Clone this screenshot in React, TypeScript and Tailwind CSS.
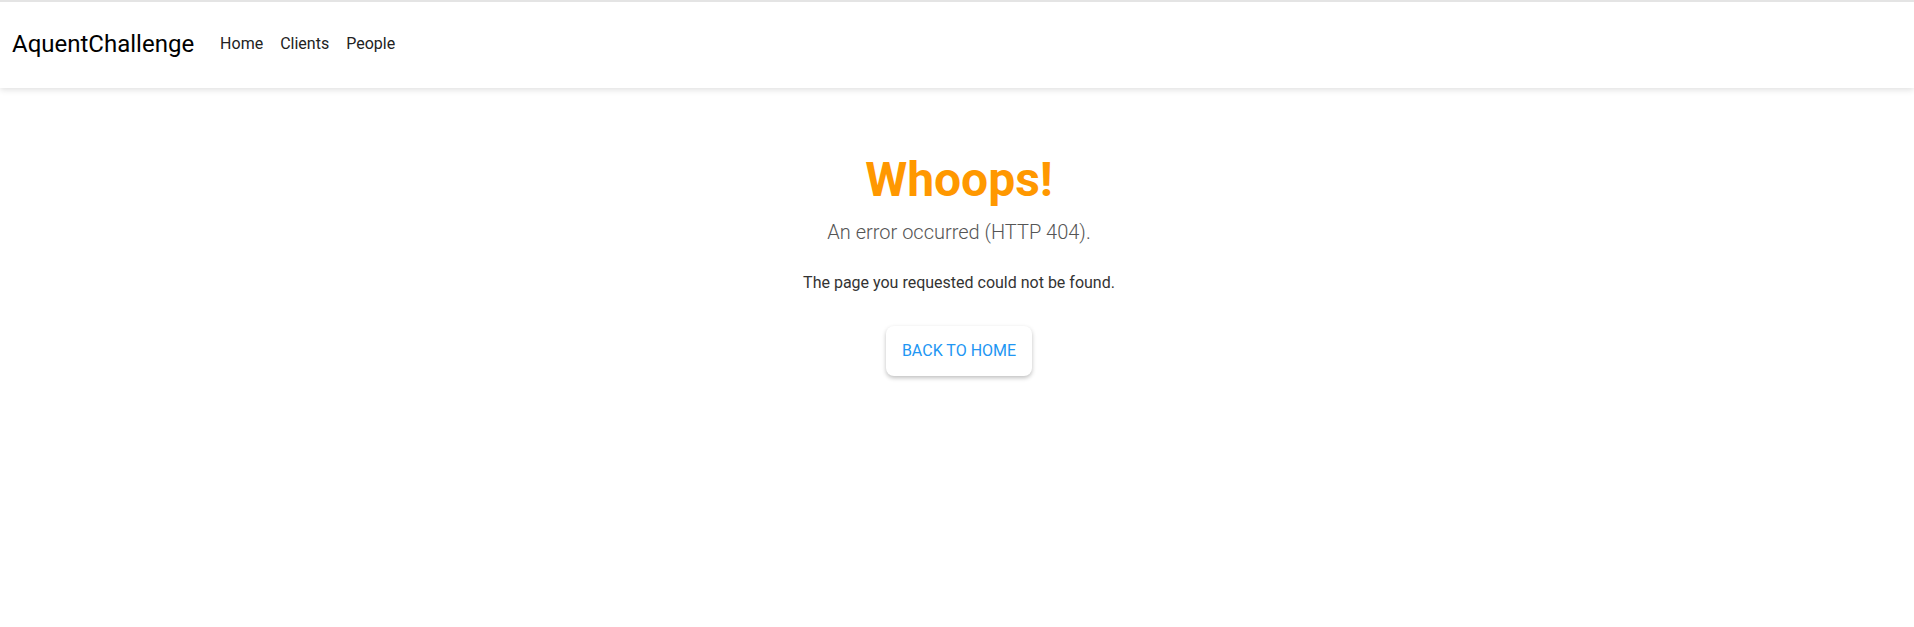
export default function App() {
  return (
    <div className="min-h-screen bg-white font-['Roboto',sans-serif]">
      <nav className="relative z-10 h-[88px] border-t-2 border-[#e4e4e4] bg-white shadow-[0_2px_6px_rgba(0,0,0,0.12)] flex items-center px-[12px] pb-[2px]">
        <a className="text-[24px] text-black leading-none mr-[26px]">AquentChallenge</a>
        <div className="flex items-center gap-[17px] text-[16px] text-[#222]">
          <a>Home</a>
          <a>Clients</a>
          <a>People</a>
        </div>
      </nav>
      <main className="flex flex-col items-center pt-[63px] pl-[4px]">
        <h1 className="text-[48px] font-bold text-[#ff9800] leading-[58px]">Whoops!</h1>
        <p className="mt-[9px] text-[20px] font-light text-[#555] leading-[28px]">An error occurred (HTTP 404).</p>
        <p className="mt-[25px] text-[16px] text-[#333] leading-[24px]">The page you requested could not be found.</p>
        <button className="mt-[31px] h-[50px] px-[16px] rounded-[8px] bg-white text-[16px] uppercase text-[#2196f3] shadow-[0_2px_4px_rgba(0,0,0,0.25)]">
          Back to Home
        </button>
      </main>
    </div>
  );
}
